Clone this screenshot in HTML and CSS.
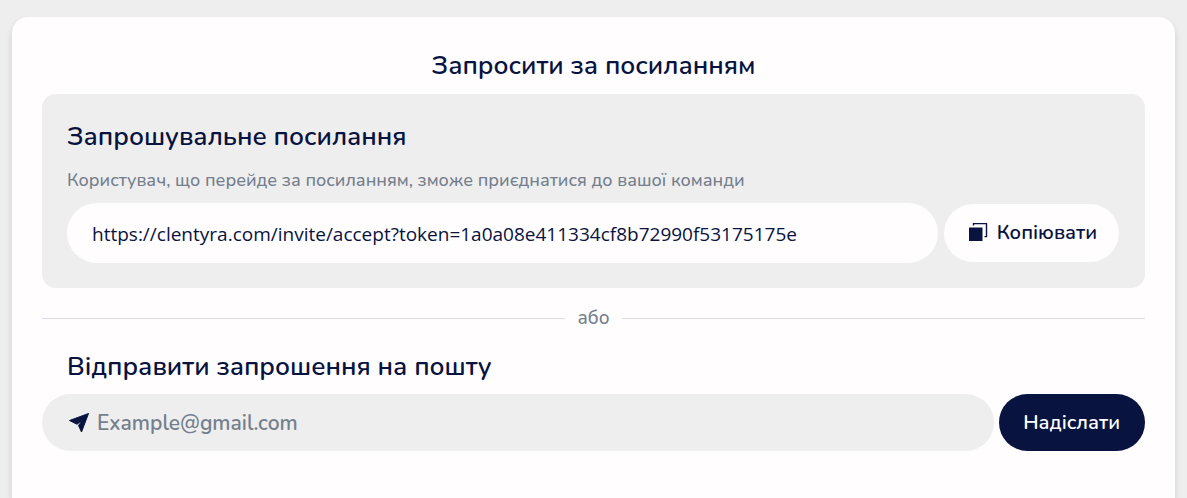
FILE: index.html
```html
<!DOCTYPE html>
<html lang="uk">
<head>
<meta charset="utf-8">
<meta name="viewport" content="width=device-width, initial-scale=1">
<title>Запросити за посиланням</title>
<link rel="stylesheet" href="styles.css">
</head>
<body>
<main class="card">
  <h1 class="title">Запросити за посиланням</h1>
  <section class="link-panel">
    <h2 class="heading"><label for="invite-link">Запрошувальне посилання</label></h2>
    <p class="hint">Користувач, що перейде за посиланням, зможе приєднатися до вашої команди</p>
    <div class="link-row">
      <input class="link-input" id="invite-link" type="text" readonly value="https://clentyra.com/invite/accept?token=1a0a08e411334cf8b72990f53175175e">
      <button class="copy" type="button">
        <svg class="copy-icon" viewBox="0 0 20 20" aria-hidden="true"><path d="M1 5.500h13.500v13.500H1z" fill="currentColor"/><path d="M5.500 3.500V1.600h13v13H16.500" fill="none" stroke="currentColor" stroke-width="1.400"/></svg>
        <span>Копіювати</span>
      </button>
    </div>
  </section>
  <div class="divider"><span>або</span></div>
  <form class="mail">
    <h2 class="heading mail-heading"><label for="email">Відправити запрошення на пошту</label></h2>
    <div class="mail-row">
      <div class="mail-field">
        <svg class="send-icon" viewBox="0 0 20 20" aria-hidden="true"><path d="M19.500.5.5 7.500l7.500 3.800L14 6.500l-4.500 6L12.500 19z" fill="currentColor" stroke="currentColor" stroke-linejoin="round"/></svg>
        <input class="mail-input" id="email" type="email" placeholder="Example@gmail.com">
      </div>
      <button class="send" type="button">Надіслати</button>
    </div>
  </form>
</main>
</body>
</html>
```
FILE: styles.css
```css
* { box-sizing: border-box; }
body {
  margin: 0;
  padding: 17px 12px 0;
  min-height: 100vh;
  display: flex;
  background: #eeeeee;
  color: #08133f;
  font-family: Nunito, "Open Sans", "Noto Sans", sans-serif;
}
.card {
  flex: 1;
  min-width: 0;
  padding: 30px 30px 47px;
  border-radius: 16px 16px 0 0;
  background: #fffdfe;
  box-shadow: 0 4px 6px rgba(0, 20, 20, 0.14);
}
.title, .heading { margin: 0; font-size: 26px; line-height: 38px; font-weight: 600; }
.title { text-align: center; }
.link-panel { margin-top: 9px; padding: 24px 26px 25px 25px; border-radius: 14px; background: #eeeeee; }
.hint { margin: 12px 0 11px; font-size: 18px; line-height: 24px; font-weight: 500; color: #757f8d; }
.link-row { display: flex; align-items: center; gap: 6px; }
input, button { font: inherit; border: 0; outline: 0; }
.link-input {
  flex: 1;
  min-width: 0;
  height: 60px;
  padding: 1px 25px 0;
  border-radius: 30px;
  background: #fffdfe;
  color: #08133f;
  font-family: "Open Sans", "Noto Sans", sans-serif;
  font-size: 19px;
}
.copy {
  display: flex;
  align-items: center;
  gap: 9px;
  height: 58px;
  padding: 0 22px 2px 24px;
  border-radius: 29px;
  background: #fffdfe;
  color: #08133f;
  font-size: 20px;
  font-weight: 600;
}
.copy-icon { width: 20px; height: 20px; }
.divider { display: flex; align-items: center; gap: 12px; margin: 18px 0; font-size: 19px; line-height: 24px; font-weight: 500; color: #757f8d; }
.divider::before, .divider::after { content: ""; flex: 1; height: 1px; background: #dad9e5; }
.mail-heading { padding-left: 25px; }
.mail-row { display: flex; gap: 5px; margin-top: 8px; }
.mail-field { flex: 1; min-width: 0; display: flex; align-items: center; gap: 8px; height: 57px; padding: 0 27px; border-radius: 29px; background: #eeeeee; }
.send-icon { flex: none; width: 20px; height: 20px; }
.mail-input { flex: 1; min-width: 0; padding: 0; background: transparent; color: #08133f; font-size: 21px; font-weight: 600; }
.mail-input::placeholder { color: #757f8d; opacity: 1; }
.send { padding: 0 25px 0 24px; border-radius: 29px; background: #08133f; color: #fffdfe; font-size: 20px; font-weight: 600; }
```
